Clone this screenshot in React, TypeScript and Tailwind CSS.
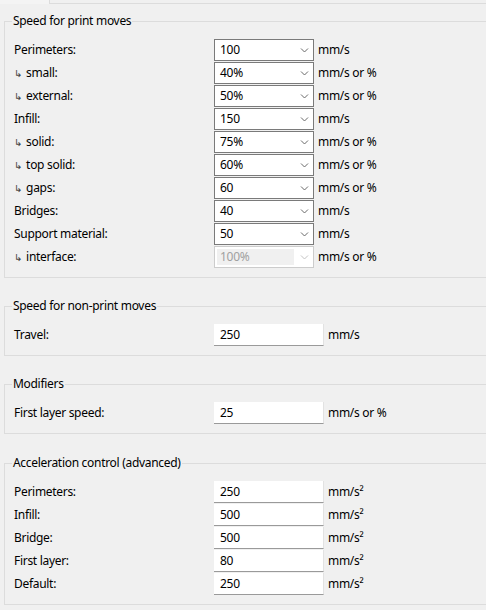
import React from 'react'

type Row = { label: string; value: string; unit: string; sub?: boolean; disabled?: boolean }

const PRINT_MOVES: Row[] = [
  { label: 'Perimeters:', value: '100', unit: 'mm/s' },
  { label: 'small:', value: '40%', unit: 'mm/s or %', sub: true },
  { label: 'external:', value: '50%', unit: 'mm/s or %', sub: true },
  { label: 'Infill:', value: '150', unit: 'mm/s' },
  { label: 'solid:', value: '75%', unit: 'mm/s or %', sub: true },
  { label: 'top solid:', value: '60%', unit: 'mm/s or %', sub: true },
  { label: 'gaps:', value: '60', unit: 'mm/s or %', sub: true },
  { label: 'Bridges:', value: '40', unit: 'mm/s' },
  { label: 'Support material:', value: '50', unit: 'mm/s' },
  { label: 'interface:', value: '100%', unit: 'mm/s or %', sub: true, disabled: true },
]

const ACCEL: Row[] = [
  { label: 'Perimeters:', value: '250', unit: 'mm/s²' },
  { label: 'Infill:', value: '500', unit: 'mm/s²' },
  { label: 'Bridge:', value: '500', unit: 'mm/s²' },
  { label: 'First layer:', value: '80', unit: 'mm/s²' },
  { label: 'Default:', value: '250', unit: 'mm/s²' },
]

function Chevron({ dim }: { dim?: boolean }) {
  return (
    <svg width="9" height="6" viewBox="0 0 9 6" className="shrink-0">
      <path d="M1 1.5 L4.5 5 L8 1.5" fill="none" stroke={dim ? '#c4c4c4' : '#6a6a6a'} strokeWidth="1" />
    </svg>
  )
}

function Group({ title, children }: { title: string; children: React.ReactNode }) {
  return (
    <div className="ml-[4px] w-[500px] border border-[#dcdcdc] flex flex-col pb-[9px]">
      <span className="-mt-[9px] ml-[7px] self-start px-[1px] bg-[#f0f0f0] leading-[16px]">{title}</span>
      <div className="mt-[10px] flex flex-col gap-[1px]">{children}</div>
    </div>
  )
}

function Label({ row }: { row: Row }) {
  return (
    <span className="w-[209px] pl-[9px]">
      {row.sub && <span className="text-[10px] text-[#444] mr-[4px]">↳</span>}
      {row.label}
    </span>
  )
}

function ComboRow({ row }: { row: Row }) {
  return (
    <div className="flex items-center h-[22px]">
      <Label row={row} />
      {row.disabled ? (
        <div className="w-[100px] h-[22px] border border-[#cccccc] bg-white flex items-center pl-[2px] pr-[4px] py-[2px]">
          <div className="flex-1 h-full bg-[#f0f0f0] text-[#a0a0a0] pl-[3px] flex items-center">{row.value}</div>
          <div className="w-[15px] flex justify-end"><Chevron dim /></div>
        </div>
      ) : (
        <div className="w-[100px] h-[22px] border border-[#7a7a7a] bg-white flex items-center justify-between pl-[5px] pr-[4px]">
          <span>{row.value}</span>
          <Chevron />
        </div>
      )}
      <span className="ml-[4px]">{row.unit}</span>
    </div>
  )
}

function InputRow({ row }: { row: Row }) {
  return (
    <div className="flex items-center h-[22px]">
      <Label row={row} />
      <div className="w-[110px] h-[22px] bg-white border-b border-b-[#9a9a9a] border-r border-r-[#e2e2e2] flex items-center pl-[6px]">
        {row.value}
      </div>
      <span className="ml-[4px]">{row.unit}</span>
    </div>
  )
}

export default function App() {
  return (
    <div
      className="w-[486px] h-[610px] overflow-hidden bg-[#f0f0f0] text-black text-[12px] tracking-[-0.3px]"
      style={{ fontFamily: '"Noto Sans", "DejaVu Sans", sans-serif' }}
    >
      {/* tab strip edge */}
      <div className="flex h-[4px]">
        <div className="w-[49px] bg-[#f4f4f4]" />
        <div className="flex-1 border-l border-b border-[#dcdcdc]" />
      </div>

      <div className="mt-[17px]">
        <Group title="Speed for print moves">
          {PRINT_MOVES.map(r => <ComboRow key={r.label} row={r} />)}
        </Group>
      </div>

      <div className="mt-[28px]">
        <Group title="Speed for non-print moves">
          <InputRow row={{ label: 'Travel:', value: '250', unit: 'mm/s' }} />
        </Group>
      </div>

      <div className="mt-[28px]">
        <Group title="Modifiers">
          <InputRow row={{ label: 'First layer speed:', value: '25', unit: 'mm/s or %' }} />
        </Group>
      </div>

      <div className="mt-[29px]">
        <Group title="Acceleration control (advanced)">
          {ACCEL.map(r => <InputRow key={r.label} row={r} />)}
        </Group>
      </div>
    </div>
  )
}
